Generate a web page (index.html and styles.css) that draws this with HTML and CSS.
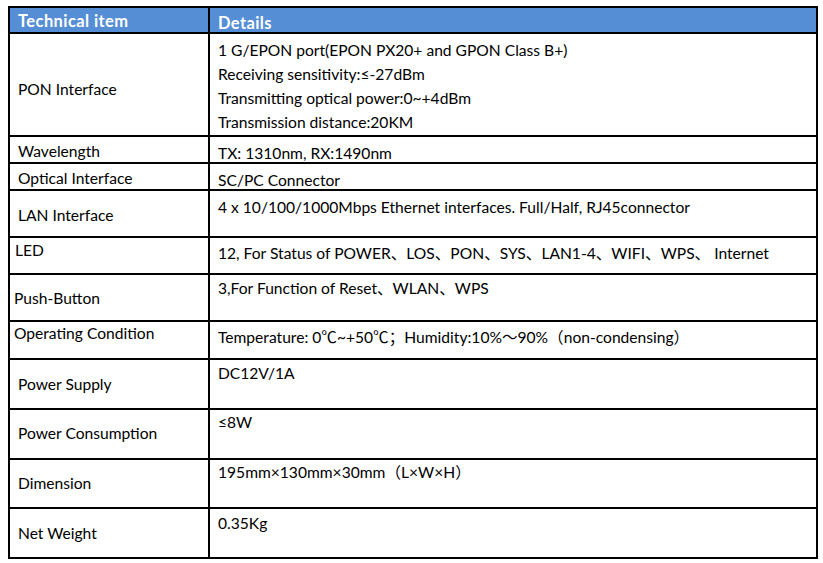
FILE: index.html
```html
<!DOCTYPE html>
<html>
<head>
<meta charset="utf-8">
<link rel="stylesheet" href="styles.css">
</head>
<body>
<div class="spec">
  <div class="cell head pt5 pl8">Technical item</div>
  <div class="cell head pt7 pl8">Details</div>

  <div class="cell r-pon pt45 pl8">PON Interface</div>
  <div class="cell r-pon pt4 pl8 lines">
    <div>1 G/EPON port(EPON PX20+ and GPON Class B+)</div>
    <div>Receiving sensitivity:≤-27dBm</div>
    <div>Transmitting optical power:0~+4dBm</div>
    <div>Transmission distance:20KM</div>
  </div>

  <div class="cell r-wave pt4 pl8">Wavelength</div>
  <div class="cell r-wave pt6 pl8">TX: 1310nm, RX:1490nm</div>

  <div class="cell r-opt pt4 pl8">Optical Interface</div>
  <div class="cell r-opt pt6 pl8">SC/PC Connector</div>

  <div class="cell r-lan pt14 pl8">LAN Interface</div>
  <div class="cell r-lan pt6 pl8">4 x 10/100/1000Mbps Ethernet interfaces. Full/Half, RJ45connector</div>

  <div class="cell r-led pt2 pl5">LED</div>
  <div class="cell r-led pt5 pl8">12, For Status of POWER、LOS、PON、SYS、LAN1-4、WIFI、WPS、 Internet</div>

  <div class="cell r-push pt13 pl4">Push-Button</div>
  <div class="cell r-push pt3 pl8">3,For Function of Reset、WLAN、WPS</div>

  <div class="cell r-oper pt1 pl4">Operating Condition</div>
  <div class="cell r-oper pt5 pl8">Temperature: 0℃~+50℃；Humidity:10%～90%（non-condensing）</div>

  <div class="cell r-tall pt14 pl8">Power Supply</div>
  <div class="cell r-tall pt3 pl8">DC12V/1A</div>

  <div class="cell r-tall pt13 pl8">Power Consumption</div>
  <div class="cell r-tall pt2 pl8">≤8W</div>

  <div class="cell r-dim pt13 pl8">Dimension</div>
  <div class="cell r-dim pt2 pl8">195mm×130mm×30mm（L×W×H）</div>

  <div class="cell r-tall pt14 pl8">Net Weight</div>
  <div class="cell r-tall pt4 pl8">0.35Kg</div>
</div>
</body>
</html>
```

FILE: styles.css
```css
html, body {
  margin: 0;
  padding: 0;
  background: #ffffff;
}

body {
  padding: 6px 0 0 8px;
  font-family: Lato, "Noto Sans CJK SC", sans-serif;
  font-size: 15.6px;
  color: #000000;
}

.spec {
  width: 810px;
  box-sizing: border-box;
  background: #000000;
  padding: 2px;
  display: grid;
  grid-template-columns: 198px 606px;
  grid-template-rows: 24px 101px 25px 25px 45px 35px 45px 36px 48px 48px 47px 48px;
  gap: 2px;
}

.cell {
  background: #ffffff;
  box-sizing: border-box;
  line-height: 20px;
  white-space: nowrap;
  overflow: hidden;
}

.head {
  background: #558ed5;
  color: #ffffff;
  font-weight: bold;
  font-size: 16.5px;
  letter-spacing: 0.4px;
  line-height: 16px;
  overflow: visible;
}

.lines div {
  line-height: 24px;
}

.pl4 { padding-left: 4px; }
.pl5 { padding-left: 5px; }
.pl8 { padding-left: 8px; }

.pt1 { padding-top: 1px; }
.pt2 { padding-top: 2px; }
.pt3 { padding-top: 3px; }
.pt4 { padding-top: 4px; }
.pt5 { padding-top: 5px; }
.pt6 { padding-top: 6px; }
.pt7 { padding-top: 7px; }
.pt13 { padding-top: 13px; }
.pt14 { padding-top: 14px; }
.pt45 { padding-top: 45px; }
```
